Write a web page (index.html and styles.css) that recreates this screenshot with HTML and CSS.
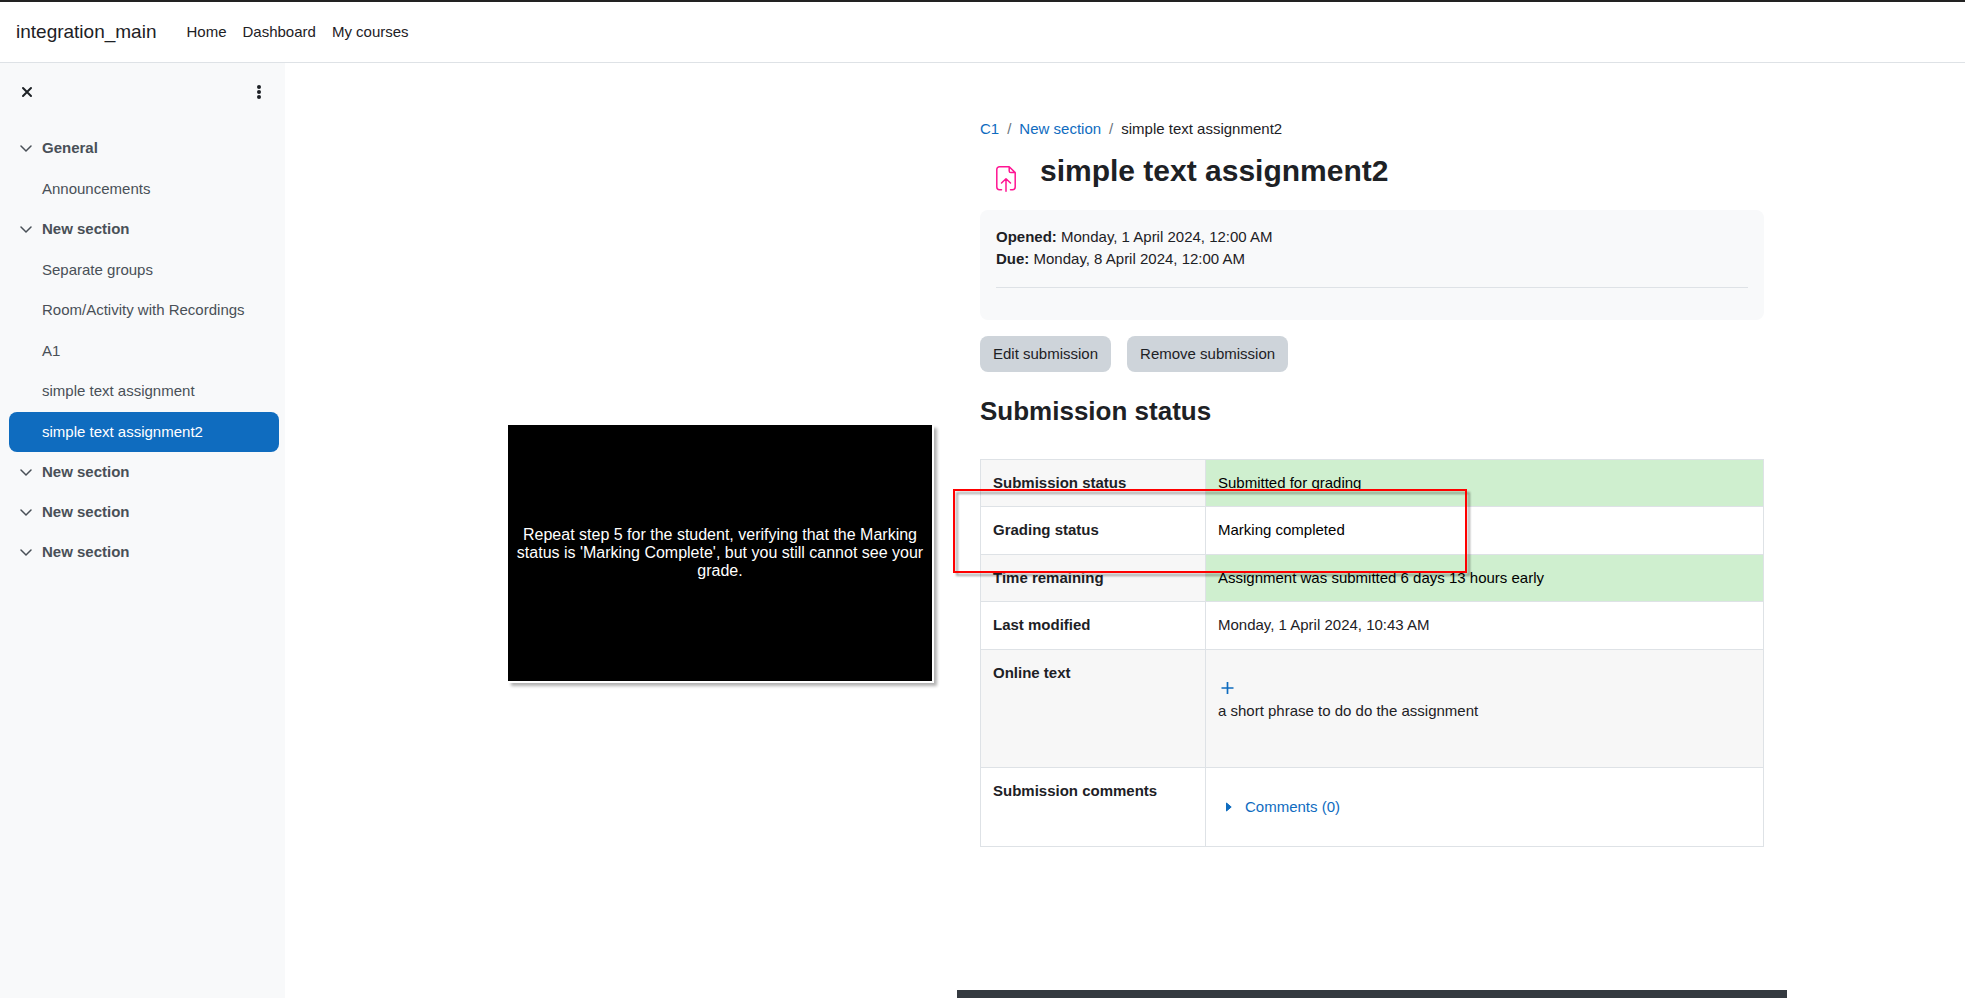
FILE: index.html
```
<!DOCTYPE html>
<html lang="en">
<head>
    <meta charset="UTF-8">
    <meta name="viewport" content="width=device-width, initial-scale=1.0">
    <title>simple text assignment2</title>
    <link rel="stylesheet" href="styles.css">
</head>
<body>
    <header class="navbar">
        <a class="brand" href="#">integration_main</a>
        <nav class="primary-nav">
            <a href="#">Home</a>
            <a href="#">Dashboard</a>
            <a href="#">My courses</a>
        </nav>
    </header>

    <div class="layout">
        <aside class="drawer">
            <div class="drawer-header">
                <button type="button" class="icon-btn" aria-label="Close course index">
                    <svg width="12" height="12" viewBox="0 0 12 12"><path d="M2 2l8 8M10 2l-8 8" stroke="currentColor" stroke-width="2" stroke-linecap="round"/></svg>
                </button>
                <button type="button" class="icon-btn" aria-label="Course index options">
                    <svg width="4" height="14" viewBox="0 0 4 14" fill="currentColor"><circle cx="2" cy="2" r="2"/><circle cx="2" cy="7" r="2"/><circle cx="2" cy="12" r="2"/></svg>
                </button>
            </div>

            <nav class="course-index">
                <a class="section" href="#"><svg class="chevron" viewBox="0 0 12 8"><path d="M1 1l5 5 5-5"/></svg>General</a>
                <ul class="activities">
                    <li><a href="#">Announcements</a></li>
                </ul>
                <a class="section" href="#"><svg class="chevron" viewBox="0 0 12 8"><path d="M1 1l5 5 5-5"/></svg>New section</a>
                <ul class="activities">
                    <li><a href="#">Separate groups</a></li>
                    <li><a href="#">Room/Activity with Recordings</a></li>
                    <li><a href="#">A1</a></li>
                    <li><a href="#">simple text assignment</a></li>
                    <li><a class="active" href="#">simple text assignment2</a></li>
                </ul>
                <a class="section" href="#"><svg class="chevron" viewBox="0 0 12 8"><path d="M1 1l5 5 5-5"/></svg>New section</a>
                <a class="section" href="#"><svg class="chevron" viewBox="0 0 12 8"><path d="M1 1l5 5 5-5"/></svg>New section</a>
                <a class="section" href="#"><svg class="chevron" viewBox="0 0 12 8"><path d="M1 1l5 5 5-5"/></svg>New section</a>
            </nav>
        </aside>

        <main class="main">
            <div class="note">Repeat step 5 for the student, verifying that the Marking status is 'Marking Complete', but you still cannot see your grade.</div>

            <div class="page">
                <div class="content">
                    <nav class="breadcrumb">
                        <a href="#">C1</a><span class="divider">/</span><a href="#">New section</a><span class="divider">/</span><span>simple text assignment2</span>
                    </nav>

                    <div class="page-title">
                        <svg class="activity-icon" width="20" height="26" viewBox="0 0 20 26" fill="none" stroke="#ff1493" stroke-width="1.5" stroke-linecap="round" stroke-linejoin="round">
                            <path d="M5.5 23.8h-2A2.7 2.7 0 0 1 .8 21.100V3.500A2.700 2.700 0 0 1 3.500.8h9.700l6 5.800v14.500a2.700 2.700 0 0 1-2.700 2.700h-2M13.200.8v4.200a1.600 1.600 0 0 0 1.600 1.600h4.400M10 25.200V12.700M5.500 17l4.500-4.300 4.500 4.300"/>
                        </svg>
                        <h1>simple text assignment2</h1>
                    </div>

                    <div class="dates">
                        <div><strong>Opened:</strong> Monday, 1 April 2024, 12:00 AM</div>
                        <div><strong>Due:</strong> Monday, 8 April 2024, 12:00 AM</div>
                        <hr>
                    </div>

                    <div class="actions">
                        <button type="button">Edit submission</button>
                        <button type="button">Remove submission</button>
                    </div>

                    <h2>Submission status</h2>

                    <div class="status">
                        <table>
                            <tr>
                                <th scope="row">Submission status</th>
                                <td class="good">Submitted for grading</td>
                            </tr>
                            <tr>
                                <th scope="row">Grading status</th>
                                <td class="graded">Marking completed</td>
                            </tr>
                            <tr>
                                <th scope="row">Time remaining</th>
                                <td class="good">Assignment was submitted 6 days 13 hours early</td>
                            </tr>
                            <tr>
                                <th scope="row">Last modified</th>
                                <td>Monday, 1 April 2024, 10:43 AM</td>
                            </tr>
                            <tr>
                                <th scope="row">Online text</th>
                                <td class="online-text">
                                    <a class="expand" href="#" aria-label="View full"><svg width="13" height="12" viewBox="0 0 13 12"><path d="M6.500 0v12M.5 6h12" stroke="currentColor" stroke-width="1.700"/></svg></a>
                                    <p>a short phrase to do do the assignment</p>
                                </td>
                            </tr>
                            <tr>
                                <th scope="row">Submission comments</th>
                                <td class="comments">
                                    <a href="#"><svg width="6" height="10" viewBox="0 0 6 10"><path d="M.5 1v8l4.700-4z" fill="currentColor" stroke="currentColor" stroke-linejoin="round"/></svg>Comments (0)</a>
                                </td>
                            </tr>
                        </table>
                        <div class="highlight"></div>
                    </div>
                </div>
                <footer class="footer"></footer>
            </div>
        </main>
    </div>
</body>
</html>
```
FILE: styles.css
```
* {
    box-sizing: border-box;
}

body {
    margin: 0;
    min-height: 100vh;
    display: flex;
    flex-direction: column;
    font-family: "Liberation Sans", Arial, sans-serif;
    font-size: 15px;
    line-height: 22px;
    color: #1d2125;
    background: #fff;
}

a {
    color: #0f6cbf;
    text-decoration: none;
}

button {
    font: inherit;
    color: inherit;
    border: none;
    cursor: pointer;
}

/* Top bar */
.navbar {
    display: flex;
    align-items: center;
    flex: none;
    height: 63px;
    padding: 0 16px;
    border-top: 2px solid #222;
    border-bottom: 1px solid #dee2e6;
}

.navbar a {
    color: #1d2125;
}

.brand {
    font-size: 19px;
    margin-right: 30px;
}

.primary-nav {
    display: flex;
    gap: 16px;
}

.layout {
    display: flex;
    flex: 1;
}

/* Course index */
.drawer {
    flex: none;
    width: 285px;
    padding: 0 6px 0 9px;
    background: #f8f9fa;
}

.drawer-header {
    display: flex;
    justify-content: space-between;
    align-items: center;
    height: 57px;
    padding: 0 8px 0 6px;
}

.icon-btn {
    display: flex;
    align-items: center;
    justify-content: center;
    width: 24px;
    height: 24px;
    padding: 0;
    background: none;
}

.course-index {
    padding-top: 8px;
}

.section {
    display: flex;
    align-items: center;
    gap: 10px;
    height: 40px;
    padding-left: 11px;
    font-weight: bold;
    color: #495057;
}

.chevron {
    width: 12px;
    height: 8px;
    margin-top: 2px;
    fill: none;
    stroke: #495057;
    stroke-width: 1.5;
    stroke-linecap: round;
}

.activities {
    margin: 0;
    padding: 1px 0 0;
    list-style: none;
}

.activities li:nth-child(even) {
    padding-bottom: 1px;
}

.activities a {
    display: block;
    padding: 9px 16px 9px 33px;
    border-radius: 8px;
    color: #495057;
}

.activities .active {
    background: #0f6cbf;
    color: #fff;
}

/* Main area */
.main {
    flex: 1;
    display: grid;
    grid-template-columns: 1fr minmax(0, 830px) 178px;
}

.note {
    justify-self: end;
    align-self: start;
    display: flex;
    align-items: center;
    width: 424px;
    height: 256px;
    margin: 362px 25px 0 0;
    padding: 0 8px;
    background: #000;
    color: #fff;
    font-size: 16px;
    line-height: 18px;
    text-align: center;
    box-shadow: 0 0 0 2px #fff, 4px 4px 3px 1px rgba(0, 0, 0, 0.3);
}

.page {
    display: flex;
    flex-direction: column;
}

.content {
    flex: 1;
    padding: 55px 23px 0;
}

.breadcrumb {
    display: flex;
}

.divider {
    padding: 0 8px;
    color: #6a737b;
}

.page-title {
    display: flex;
    align-items: flex-start;
    height: 70px;
    padding: 13px 16px 0;
}

.activity-icon {
    margin: 13px 24px 0 0;
}

h1 {
    margin: 0;
    font-size: 30px;
    line-height: 36px;
}

.dates {
    min-height: 110px;
    padding: 16px;
    border-radius: 8px;
    background: #f8f9fa;
}

.dates hr {
    margin: 17px 0 0;
    border: none;
    border-top: 1px solid #dee2e6;
}

.actions {
    display: flex;
    gap: 16px;
    margin-top: 16px;
}

.actions button {
    padding: 7px 13px;
    border-radius: 8px;
    background: #ced4da;
}

h2 {
    margin: 23px 0 32px;
    font-size: 26px;
    line-height: 32px;
}

/* Status table */
.status {
    position: relative;
}

table {
    width: 100%;
    border-collapse: collapse;
    table-layout: fixed;
}

tr {
    height: 47px;
}

tr:nth-child(even) {
    height: 48px;
}

tr:nth-child(odd) {
    background: #f7f7f7;
}

th,
td {
    padding: 12px;
    border: 1px solid #dee2e6;
    text-align: left;
    vertical-align: top;
}

th {
    width: 225px;
}

.good {
    background: #cfefcf;
    color: #000;
}

.graded {
    color: #000;
}

.online-text {
    height: 118px;
    padding-top: 32px;
}

.online-text p {
    margin: 6px 0 0;
}

.expand {
    display: flex;
    padding-left: 3px;
}

.comments {
    height: 79px;
    padding-top: 28px;
}

.comments a {
    display: flex;
    align-items: center;
    gap: 13px;
    padding-left: 8px;
}

/* Red frame over the grading row */
.highlight {
    position: absolute;
    top: 30px;
    left: -27px;
    width: 514px;
    height: 84px;
    border: 2px solid #f00;
    filter: drop-shadow(3px 3px 1px rgba(0, 0, 0, 0.35));
    pointer-events: none;
}

.footer {
    height: 8px;
    background: #343a40;
}
```
